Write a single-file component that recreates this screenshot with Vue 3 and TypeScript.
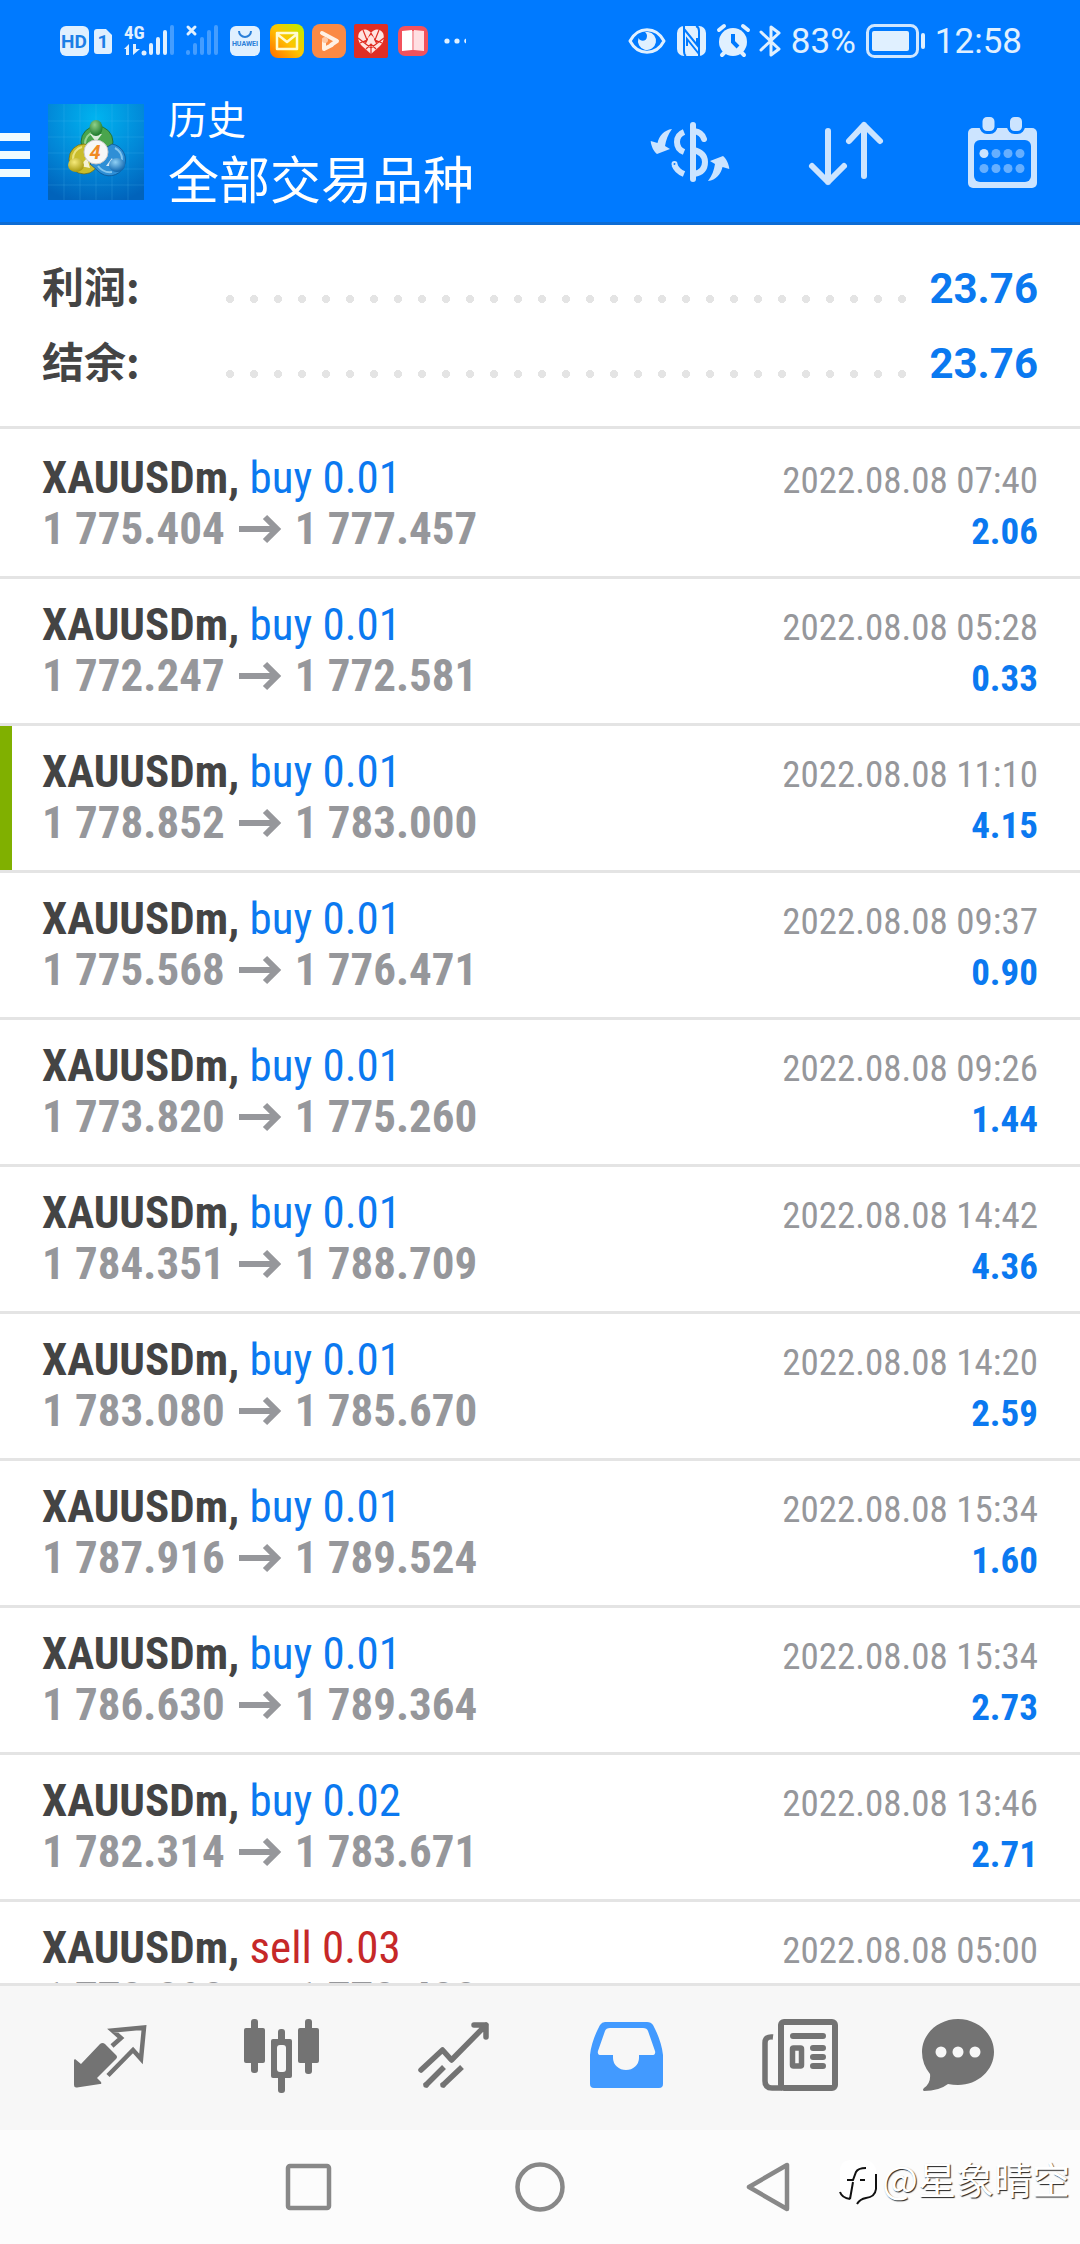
<script setup lang="ts">
interface Deal {
  side: 'buy' | 'sell'
  volume: string
  open: string
  close: string
  time: string
  profit: string
  marked?: boolean
}

const symbol = 'XAUUSDm'

const totals = [
  { label: '利润', value: '23.76' },
  { label: '结余', value: '23.76' },
]

const deals: Deal[] = [
  { side: 'buy', volume: '0.01', open: '1 775.404', close: '1 777.457', time: '2022.08.08 07:40', profit: '2.06' },
  { side: 'buy', volume: '0.01', open: '1 772.247', close: '1 772.581', time: '2022.08.08 05:28', profit: '0.33' },
  { side: 'buy', volume: '0.01', open: '1 778.852', close: '1 783.000', time: '2022.08.08 11:10', profit: '4.15', marked: true },
  { side: 'buy', volume: '0.01', open: '1 775.568', close: '1 776.471', time: '2022.08.08 09:37', profit: '0.90' },
  { side: 'buy', volume: '0.01', open: '1 773.820', close: '1 775.260', time: '2022.08.08 09:26', profit: '1.44' },
  { side: 'buy', volume: '0.01', open: '1 784.351', close: '1 788.709', time: '2022.08.08 14:42', profit: '4.36' },
  { side: 'buy', volume: '0.01', open: '1 783.080', close: '1 785.670', time: '2022.08.08 14:20', profit: '2.59' },
  { side: 'buy', volume: '0.01', open: '1 787.916', close: '1 789.524', time: '2022.08.08 15:34', profit: '1.60' },
  { side: 'buy', volume: '0.01', open: '1 786.630', close: '1 789.364', time: '2022.08.08 15:34', profit: '2.73' },
  { side: 'buy', volume: '0.02', open: '1 782.314', close: '1 783.671', time: '2022.08.08 13:46', profit: '2.71' },
  { side: 'sell', volume: '0.03', open: '1 778.898', close: '1 778.488', time: '2022.08.08 05:00', profit: '1.23' },
]
</script>

<template>
  <div class="screen">
    <header class="top">
      <div class="status">
        <div class="status-left">
          <svg width="160" height="34" viewBox="0 0 160 34" fill="#e0f0ff">
            <rect x="0" y="2" width="29" height="30" rx="6" />
            <text x="14" y="24" class="hd" text-anchor="middle">HD</text>
            <path d="M37 5H46L52 11V27a3 3 0 0 1-3 3H37a3 3 0 0 1-3-3V8a3 3 0 0 1 3-3Z" />
            <text x="43" y="24" class="sim" text-anchor="middle">1</text>
            <text x="64" y="15" class="net">4G</text>
            <path d="M69 20V31H66V25H64ZM73 20V31L80 25H76V20Z" />
            <circle cx="84" cy="29" r="2.500" />
            <g stroke="#e0f0ff" stroke-width="4" stroke-linecap="round">
              <path d="M91 21V29M98 15V29M105 8V29" />
              <path d="M112 3V29" opacity=".3" />
              <g opacity=".3">
                <path d="M128 28V29M135 21V29M142 15V29M149 8V29M156 3V29" />
              </g>
              <path d="M128 3L135 10M135 3L128 10" stroke-width="3" />
            </g>
          </svg>
          <svg width="34" height="34" viewBox="0 0 34 34">
            <rect x="2" y="2" width="30" height="30" rx="6" fill="#e0f0ff" />
            <path d="M11 7a6 6 0 0 0 12 0" fill="none" stroke="#2b7fd8" stroke-width="2" />
            <text x="17" y="22" class="maker" text-anchor="middle">HUAWEI</text>
          </svg>
          <svg width="34" height="34" viewBox="0 0 34 34">
            <defs>
              <linearGradient id="mail" x1="1" y1="0" x2="0" y2="1">
                <stop offset="0" stop-color="#b8f000" />
                <stop offset=".5" stop-color="#ffc400" />
                <stop offset="1" stop-color="#ff6a00" />
              </linearGradient>
            </defs>
            <rect width="34" height="34" rx="8" fill="url(#mail)" />
            <path d="M7 9H27V25H7ZM7 10L17 18L27 10" fill="none" stroke="#fffbd0" stroke-width="2.500" stroke-linejoin="round" />
          </svg>
          <svg width="34" height="34" viewBox="0 0 34 34">
            <rect width="34" height="34" rx="8" fill="#fb8a45" />
            <path d="M10 9L25 17L19 21M12 16V25L20 21" fill="none" stroke="#fff2e6" stroke-width="4" stroke-linecap="round" stroke-linejoin="round" />
            <circle cx="13" cy="16" r="3" fill="#ffc9a5" />
          </svg>
          <svg width="34" height="34" viewBox="0 0 34 34">
            <rect width="34" height="34" rx="2" fill="#e02e24" />
            <path d="M17 9C14 5 9 4 5 9C3 14 5 19 8 22L17 30L26 22C29 19 31 14 29 9C25 4 20 5 17 9Z" fill="#ffe4e0" />
            <path d="M17 9L11 20M17 9L23 20M4 14L17 24L30 14M9 6L13 16M25 6L21 16M17 30V20M6 19L13 16M28 19L21 16M12 25L17 20L22 25" fill="none" stroke="#e02e24" stroke-width="1.200" />
            <circle cx="17" cy="15" r="3" fill="#ffe4e0" />
          </svg>
          <svg width="34" height="34" viewBox="0 0 34 34">
            <rect x="2" y="2" width="30" height="30" rx="7" fill="#f2525c" />
            <path d="M6 7L16 6V26L6 27Z" fill="#fff" />
            <path d="M18 6L28 7V27L18 26Z" fill="#ffdfe2" />
            <path d="M16 7H18V26H16Z" fill="#f7a5ab" />
          </svg>
          <svg width="34" height="34" viewBox="0 0 34 34" fill="#e0f0ff">
            <circle cx="9" cy="17" r="2.600" />
            <circle cx="19" cy="17" r="2.600" />
            <path d="M28 14.500V19.500A2.600 2.600 0 0 1 28 14.500Z" />
          </svg>
        </div>
        <div class="status-right">
          <svg width="38" height="34" viewBox="0 0 38 34">
            <path d="M2 17C10 2 28 2 36 17C28 32 10 32 2 17Z" fill="none" stroke="#e0f0ff" stroke-width="3" stroke-linejoin="round" />
            <path d="M20 8A9 9 0 1 1 10.500 14C12 18 19 18 19 12C19 10 18 9 17 8Z" fill="#e0f0ff" />
          </svg>
          <svg width="31" height="34" viewBox="0 0 31 34">
            <rect x="1" y="2" width="29" height="30" rx="7" fill="#e0f0ff" />
            <path d="M8 2V27Q8 31 10 32M8 5L21 21V14M23 32V7Q23 3 20 2M23 30L11 15V22" fill="none" stroke="#007aff" stroke-width="2" />
          </svg>
          <svg width="33" height="34" viewBox="0 0 33 34">
            <circle cx="16" cy="18" r="14" fill="#e0f0ff" />
            <path d="M2 6L7 2M31 6L26 2M5 31L8 28M27 31L24 28" stroke="#e0f0ff" stroke-width="4" stroke-linecap="round" />
            <path d="M16 10V18L21 23" fill="none" stroke="#007aff" stroke-width="4" />
          </svg>
          <svg width="21" height="34" viewBox="0 0 21 34">
            <path d="M1 8L19 25L11 31V3L19 9L1 26" fill="none" stroke="#e0f0ff" stroke-width="3" stroke-linecap="round" stroke-linejoin="round" />
          </svg>
          <span>83%</span>
          <svg width="59" height="34" viewBox="0 0 59 34">
            <rect x="1.500" y="1.500" width="50" height="31" rx="7" fill="none" stroke="#cfe6ff" stroke-width="3" />
            <rect x="6" y="7" width="37" height="20" rx="2" fill="#e0f0ff" />
            <rect x="55" y="9" width="4" height="16" rx="2" fill="#e0f0ff" />
          </svg>
          <time>12:58</time>
        </div>
      </div>
      <div class="appbar">
        <button class="menu" type="button" aria-label="菜单">
          <i></i><i></i><i></i>
        </button>
        <svg class="logo" width="96" height="96" viewBox="0 0 96 96">
          <defs>
            <radialGradient id="sky" cx=".5" cy=".15" r=".9">
              <stop offset="0" stop-color="#00b4f0" />
              <stop offset=".6" stop-color="#0285d6" />
              <stop offset="1" stop-color="#0163bb" />
            </radialGradient>
            <radialGradient id="green" cx=".4" cy=".3" r=".7">
              <stop offset="0" stop-color="#8fd08a" />
              <stop offset="1" stop-color="#1d7a2b" />
            </radialGradient>
            <radialGradient id="yellow" cx=".4" cy=".3" r=".7">
              <stop offset="0" stop-color="#f6ea7a" />
              <stop offset="1" stop-color="#a89a10" />
            </radialGradient>
            <radialGradient id="blue" cx=".4" cy=".3" r=".7">
              <stop offset="0" stop-color="#8fd0f5" />
              <stop offset="1" stop-color="#0d64ad" />
            </radialGradient>
          </defs>
          <rect width="96" height="96" fill="url(#sky)" />
          <path d="M0 17H96M0 33H96M0 49H96M0 65H96M0 81H96M16 0V96M32 0V96M48 0V96M64 0V96M80 0V96" stroke="#5cc4f5" stroke-opacity=".2" fill="none" />
          <g stroke-opacity=".7">
            <circle cx="49" cy="38" r="16" fill="#4aa54d" stroke="#175f22" />
            <path d="M37 40A12 12 0 0 1 46 28" fill="none" stroke="#b5e5ae" stroke-width="2" />
            <circle cx="36" cy="55" r="15" fill="#c9bd2c" stroke="#6f680c" />
            <path d="M25 55A12 12 0 0 1 34 43" fill="none" stroke="#f8f2a0" stroke-width="2" />
            <path d="M42 60L56 45L64 40A16 16 0 1 1 50 67Z" fill="#2f8fd6" stroke="#0b4f8c" />
            <path d="M67 44A13 13 0 0 1 74 56M50 62A15 15 0 0 0 64 68" fill="none" stroke="#a5dbf8" stroke-width="2" />
          </g>
          <path d="M42 30H54L48 38ZM32 62L39 54L42 64ZM58 62L64 54L67 62Z" fill="#fff" fill-opacity=".8" />
          <ellipse cx="48" cy="24" rx="6.500" ry="8" fill="url(#green)" />
          <ellipse cx="28" cy="61" rx="8" ry="7" fill="url(#yellow)" />
          <ellipse cx="69" cy="61" rx="8" ry="7" fill="url(#blue)" />
          <circle cx="48" cy="48" r="12" fill="#f7f7f7" stroke="#c8c8c8" />
          <text x="47" y="55" class="four" text-anchor="middle">4</text>
        </svg>
        <div class="heading">
          <p>历史</p>
          <h1>全部交易品种</h1>
        </div>
        <div class="actions">
          <button type="button" aria-label="交易品种">
            <svg width="84" height="84" viewBox="0 0 84 84">
              <g fill="none" stroke="#cce4ff" stroke-width="6">
                <path d="M45 15V69" stroke-linecap="round" />
                <path d="M46 21C52 22 55 25 56 29" stroke-linecap="round" />
                <path d="M45 40C55 42 57 47 57 52C57 59 53 63 46 64" />
                <path d="M36 22C31 24 29 28 29 32C29 36 31 40 36 42" />
                <path d="M26.500 55C28 59 31 62 36 64" />
                <circle cx="26.500" cy="54" r="1" stroke-width="4" />
              </g>
              <g fill="#cce4ff">
                <path id="swap" d="M24 19C16 20 11 26 9.500 33L2.700 31C3 36 6 42 9 44L22 39L17 36C18 30 20 24 24 19Z" />
                <use href="#swap" transform="rotate(180 42 45)" />
              </g>
            </svg>
          </button>
          <button type="button" aria-label="排序">
            <svg width="84" height="84" viewBox="0 0 84 84" fill="none" stroke="#cce4ff" stroke-width="6" stroke-linecap="round" stroke-linejoin="round">
              <path d="M24 21V72M8 56L24 72L40 56" />
              <path d="M60 66V15M45 31L60 15L76 31" />
            </svg>
          </button>
          <button type="button" aria-label="日期">
            <svg width="84" height="84" viewBox="0 0 84 84">
              <rect x="8" y="18" width="69" height="60" rx="5" fill="#cce4ff" />
              <rect x="14" y="30" width="57" height="42" rx="6" fill="#007aff" />
              <g fill="#cce4ff" stroke="#007aff" stroke-width="3">
                <rect x="21" y="5.500" width="15" height="17" rx="6" />
                <rect x="48.500" y="5.500" width="15" height="17" rx="6" />
              </g>
              <g fill="#66afff">
                <circle cx="24" cy="43.500" r="4.500" fill="#cce4ff" />
                <circle cx="36" cy="43.500" r="4.500" />
                <circle cx="48" cy="43.500" r="4.500" />
                <circle cx="60" cy="43.500" r="4.500" />
                <circle cx="24" cy="58.500" r="4.500" />
                <circle cx="36" cy="58.500" r="4.500" />
                <circle cx="48" cy="58.500" r="4.500" />
                <circle cx="60" cy="58.500" r="4.500" />
              </g>
            </svg>
          </button>
        </div>
      </div>
    </header>

    <main class="history">
      <dl class="totals">
        <div v-for="t in totals" :key="t.label" class="total">
          <dt>{{ t.label }}:</dt>
          <dd class="leader" aria-hidden="true"></dd>
          <dd class="sum">{{ t.value }}</dd>
        </div>
      </dl>
      <ul class="deals">
        <li v-for="(d, i) in deals" :key="i" class="deal" :class="{ marked: d.marked }">
          <div class="line">
            <span class="name">{{ symbol }}, <span :class="d.side">{{ d.side }} {{ d.volume }}</span></span>
            <time class="when">{{ d.time }}</time>
          </div>
          <div class="line">
            <span class="prices">
              <span>{{ d.open }}</span>
              <svg width="42" height="30" viewBox="0 0 42 30" fill="none" stroke="currentColor" stroke-width="6">
                <path d="M0 15H38M26 3L38 15L26 27" />
              </svg>
              <span>{{ d.close }}</span>
            </span>
            <span class="profit">{{ d.profit }}</span>
          </div>
        </li>
      </ul>
    </main>

    <nav class="tabs">
      <button type="button" aria-label="行情">
        <svg width="96" height="96" viewBox="0 0 96 96">
          <path d="M13 49L19 54L38 34Q40.500 32 43 34L54 45Q56 47 54 49L35 68L39 72Q40 74 38 74L15 77.500Q12 78 12 75V50Z" fill="#737373" />
          <path d="M50 36L59 28L50.500 20.500L82 17.500L79 49L71 40L46 65.500" fill="none" stroke="#737373" stroke-width="4.500" />
        </svg>
      </button>
      <button type="button" aria-label="图表">
        <svg width="96" height="96" viewBox="0 0 96 96" fill="#737373">
          <rect x="17" y="9" width="7" height="54" rx="3" />
          <rect x="10" y="18" width="21" height="35" rx="2" />
          <rect x="71" y="9" width="7" height="55" rx="3" />
          <rect x="64" y="18" width="21" height="35" rx="2" />
          <rect x="44" y="19" width="7" height="64" rx="3" />
          <rect x="37" y="29" width="21" height="39" rx="2" />
          <rect x="43" y="35" width="9" height="27" rx="3" fill="#f7f7f7" />
        </svg>
      </button>
      <button type="button" aria-label="交易">
        <svg width="96" height="96" viewBox="0 0 96 96" fill="none" stroke="#737373" stroke-width="5.500" stroke-linejoin="round">
          <path d="M15 60L36.500 40L45.500 50L80 15M68 15H80V27" stroke-linecap="round" />
          <path d="M19 76L38 57M36 76L56 57" />
          <path d="M20 75h0M37 75h0" stroke-linecap="round" />
        </svg>
      </button>
      <button type="button" aria-label="历史" aria-current="page">
        <svg width="96" height="96" viewBox="0 0 96 96">
          <path fill="#429aff" fill-rule="evenodd" d="M27 12H69Q73 12 75 15C80 24 84 35 85 45V74a4 4 0 0 1-4 4H16a4 4 0 0 1-4-4V45C13 35 17 24 22 15Q24 12 27 12ZM32 18Q28 18 27 21L20 41Q19 45 23 45H35V48A13 12 0 0 0 61 48V45H74Q78 45 77 41L70 21Q69 18 65 18Z" />
        </svg>
      </button>
      <button type="button" aria-label="新闻">
        <svg width="96" height="96" viewBox="0 0 96 96" fill="none" stroke="#737373" stroke-width="6">
          <rect x="31" y="12" width="54" height="66" rx="3" />
          <path d="M23 27Q15 26 15 33V71Q15 78 22 78H32" stroke-width="5.500" />
          <path d="M43 26H73M63 38H73M63 47H73M63 56H73" stroke-linecap="round" />
          <rect x="42.500" y="38" width="9" height="18" rx="1" stroke-width="5.500" />
        </svg>
      </button>
      <button type="button" aria-label="消息">
        <svg width="96" height="96" viewBox="0 0 96 96">
          <path d="M36 9C56 9 72 24 72 42S56 75 36 75Q31 75 26 74Q17 81 2 81Q0 80 2 78Q9 73 8 64Q0 54 0 42C0 24 16 9 36 9Z" fill="#737373" />
          <g fill="#f7f7f7">
            <circle cx="19" cy="42" r="5.500" />
            <circle cx="36" cy="42" r="5.500" />
            <circle cx="53" cy="42" r="5.500" />
          </g>
        </svg>
      </button>
    </nav>

    <footer class="system">
      <button type="button" aria-label="最近任务">
        <svg width="60" height="60" viewBox="0 0 60 60" fill="none" stroke="#888" stroke-width="4.500">
          <rect x="9" y="9" width="41" height="42" rx="2" />
        </svg>
      </button>
      <button type="button" aria-label="主屏幕">
        <svg width="60" height="60" viewBox="0 0 60 60" fill="none" stroke="#888" stroke-width="4.500">
          <circle cx="30" cy="30" r="22.500" />
        </svg>
      </button>
      <button type="button" aria-label="返回">
        <svg width="60" height="60" viewBox="0 0 60 60" fill="none" stroke="#888" stroke-width="4.500" stroke-linejoin="round">
          <path d="M8 30L46 8V52Z" />
        </svg>
      </button>
      <div class="mark">
        <svg width="40" height="48" viewBox="0 0 40 48">
          <path d="M12 2H28Q38 4 38 14V32Q38 40 28 41L20 46L18 41H10Q2 40 2 32V12Q2 3 12 2Z" fill="#fff" />
          <path d="M9 22H15L18 14Q20 10 28 10M22 22H27M15 24L12 41M2 34Q4 40 12 41M38 16V31Q37 39 28 40Q22 41 19 46" fill="none" stroke="#111" stroke-width="2" />
        </svg>
        <span>@星象晴空</span>
      </div>
    </footer>
  </div>
</template>

<style>
body {
  margin: 0;
  background: #fff;
}
</style>

<style scoped>
.screen {
  display: flex;
  flex-direction: column;
  height: 100vh;
  overflow: hidden;
  background: #fff;
  font-family: Roboto, "Noto Sans CJK SC", sans-serif;
}

button {
  display: flex;
  padding: 0;
  border: 0;
  background: none;
}

svg {
  display: block;
  flex: none;
  overflow: visible;
}

.top {
  flex: none;
  border-bottom: 3px solid #0d6cd4;
  background: #007aff;
  color: #fff;
}

.status {
  display: flex;
  justify-content: space-between;
  align-items: center;
  height: 82px;
  padding: 0 58px 0 60px;
  color: #e0f0ff;
  font-size: 35px;
}

.status-left {
  display: flex;
  gap: 8px;
}

.status-right {
  display: flex;
  align-items: center;
  gap: 10px;
}

.hd,
.sim {
  font: 700 19px Roboto, sans-serif;
  fill: #1c7ee6;
}

.net {
  font: 700 19px "Roboto Condensed", Roboto, sans-serif;
}

.maker {
  font: 700 7px Roboto, sans-serif;
  fill: #2b7fd8;
}

.appbar {
  display: flex;
  align-items: center;
  height: 140px;
  padding-right: 36px;
}

.menu {
  flex-direction: column;
  gap: 10px;
  width: 30px;
  padding-top: 6px;
}

.menu i {
  width: 30px;
  height: 8px;
  background: #f0fbff;
}

.logo {
  margin: 0 24px 0 18px;
}

.heading {
  padding-top: 8px;
}

.four {
  font: italic 700 20px Roboto, sans-serif;
  fill: #f08a24;
}

.heading p,
.heading h1 {
  margin: 0;
  font-weight: 400;
  white-space: nowrap;
}

.heading p {
  font-size: 39px;
  line-height: 52px;
}

.heading h1 {
  font-size: 51px;
  line-height: 70px;
}

.actions {
  display: flex;
  gap: 72px;
  margin-left: auto;
}

.history {
  flex: 1;
  min-height: 0;
  overflow: hidden;
}

.totals {
  margin: 0 0 3px;
  padding: 22px 42px 29px;
  border-bottom: 3px solid #e4e4e4;
}

.total {
  display: flex;
  align-items: baseline;
  height: 75px;
  color: #444;
  font-size: 42px;
  font-weight: 700;
  line-height: 75px;
}

.total dt {
  width: 184px;
  font-family: "Noto Sans CJK SC", sans-serif;
}

.total dd {
  margin: 0;
}

.total .leader {
  flex: 1;
  height: 8px;
  margin-bottom: 5px;
  background: radial-gradient(circle at 4px 4px, #e4e4e4 4px, transparent 4px) 0 0 / 24px 8px repeat-x;
}

.sum {
  width: 132px;
  color: #0b79f0;
  text-align: right;
}

.deals {
  margin: 0;
  padding: 0;
  list-style: none;
}

.deal {
  padding: 20px 42px 22px;
  border-bottom: 3px solid #e4e4e4;
  font-family: "Roboto Condensed", Roboto, sans-serif;
  font-size: 45px;
}

.deal.marked {
  box-shadow: inset 12px 0 #80b000;
}

.line {
  display: flex;
  justify-content: space-between;
  align-items: baseline;
  height: 51px;
  line-height: 51px;
  white-space: nowrap;
}

.name {
  color: #444;
  font-weight: 700;
}

.buy {
  color: #0b79f0;
  font-weight: 400;
}

.sell {
  color: #c62828;
  font-weight: 400;
}

.prices {
  display: flex;
  align-items: center;
  gap: 14px;
  color: #96979b;
  font-weight: 700;
}

.when,
.profit {
  font-size: 37px;
}

.when {
  color: #96979b;
}

.profit {
  color: #0b79f0;
  font-weight: 700;
}

.tabs {
  display: flex;
  flex: none;
  align-items: center;
  height: 144px;
  padding: 0 24px;
  border-top: 3px solid #e4e4e4;
  background: #f7f7f7;
}

.tabs button {
  flex: 1;
  justify-content: center;
}

.system {
  display: flex;
  flex: none;
  position: relative;
  justify-content: center;
  align-items: center;
  gap: 171px;
  height: 114px;
  background: #fcfcfc;
}

.mark {
  display: flex;
  position: absolute;
  right: 10px;
  bottom: 34px;
  align-items: center;
  gap: 4px;
  color: #fff;
  font-family: "Noto Sans CJK SC", sans-serif;
  font-size: 38px;
  line-height: 48px;
  text-shadow: 1px 1px 1px #222;
}

.mark span {
  margin-bottom: 8px;
}
</style>
